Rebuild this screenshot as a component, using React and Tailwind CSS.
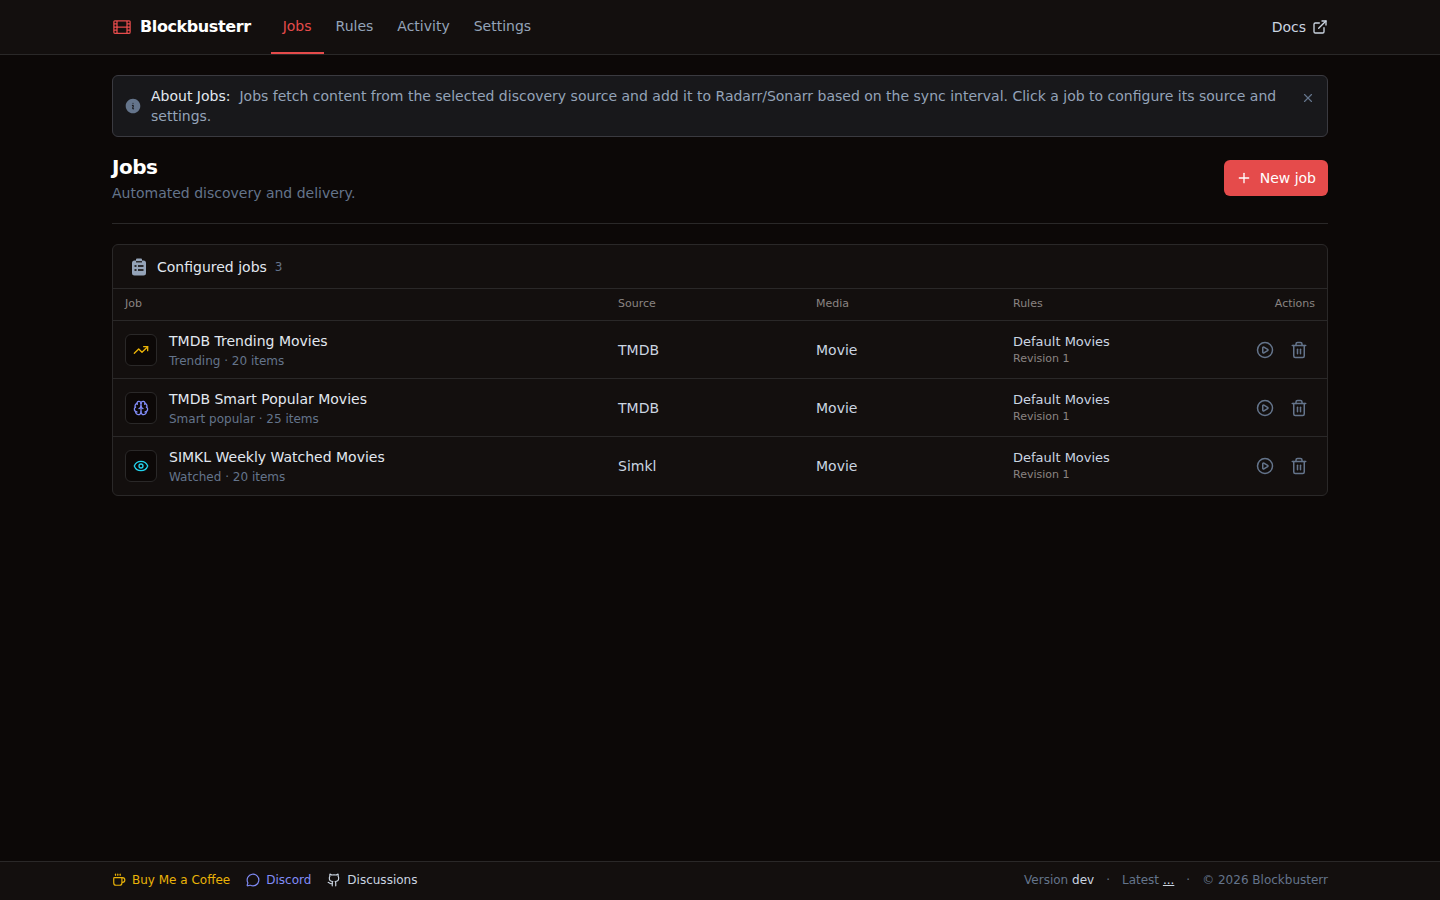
import React from 'react';
import { ExternalLink, X, Plus, TrendingUp, Brain, Eye, CirclePlay, Trash2, Coffee, MessageCircle, Github } from 'lucide-react';
import { HiOutlineFilm, HiInformationCircle } from 'react-icons/hi2';

const jobs = [
  { name: 'TMDB Trending Movies', sub: 'Trending · 20 items', source: 'TMDB', icon: TrendingUp, color: 'text-[#eab308]' },
  { name: 'TMDB Smart Popular Movies', sub: 'Smart popular · 25 items', source: 'TMDB', icon: Brain, color: 'text-[#818cf8]' },
  { name: 'SIMKL Weekly Watched Movies', sub: 'Watched · 20 items', source: 'Simkl', icon: Eye, color: 'text-[#22d3ee]' },
];

function ClipboardIcon() {
  return (
    <svg viewBox="0 0 16 18" className="w-4 h-[18px] mr-0.5 text-[#94a3b8]" fill="currentColor">
      <path d="M6 0.500h4a1 1 0 0 1 1 1V2.500h1.500A2.500 2.500 0 0 1 15 5v10a2.500 2.500 0 0 1-2.500 2.500h-9A2.500 2.500 0 0 1 1 15V5a2.500 2.500 0 0 1 2.500-2.500H5V1.500a1 1 0 0 1 1-1z" />
      <g fill="#130f0e">
        <rect x="5" y="3.200" width="6" height="1.200" />
        <rect x="3.500" y="7.200" width="2" height="1.600" />
        <rect x="7" y="7.200" width="5.500" height="1.600" />
        <rect x="3.500" y="11.200" width="2" height="1.600" />
        <rect x="7" y="11.200" width="5.500" height="1.600" />
      </g>
    </svg>
  );
}

export default function App() {
  return (
    <div className="min-h-screen flex flex-col bg-[#0c0807] text-white font-['DejaVu_Sans',sans-serif]">
      <header className="h-[55px] bg-[#130f0e] border-b border-[#2a2828]">
        <div className="max-w-7xl mx-auto px-8 h-full flex items-center justify-between">
          <div className="flex items-center h-full">
            <div className="flex items-center gap-2 mr-5">
              <HiOutlineFilm className="w-5 h-5 text-[#e54b4b]" />
              <span className="text-base font-bold tracking-tight">Blockbusterr</span>
            </div>
            <nav className="flex h-full text-sm text-[#94a3b8]">
              <a className="px-3 pt-4 text-[#e54b4b] border-b-2 border-[#e54b4b]">Jobs</a>
              <a className="px-3 pt-4">Rules</a>
              <a className="px-3 pt-4">Activity</a>
              <a className="px-3 pt-4">Settings</a>
            </nav>
          </div>
          <a className="flex items-center gap-1.5 text-sm text-[#cbd5e1]">
            Docs <ExternalLink className="w-4 h-4" />
          </a>
        </div>
      </header>

      <main className="flex-1 max-w-7xl w-full mx-auto px-8 pt-5">
        <div className="flex items-center gap-[9px] px-3 py-2.5 rounded-md border border-[#3a3a40] bg-[#18181b]">
          <HiInformationCircle className="w-[18px] h-[18px] -ml-px text-[#64748b] shrink-0" />
          <p className="flex-1 text-sm leading-5 text-[#94a3b8] pr-2">
            <span className="text-[#e2e8f0] mr-[9px]">About Jobs:</span>
            Jobs fetch content from the selected discovery source and add it to Radarr/Sonarr based on the sync interval. Click a job to configure its source and settings.
          </p>
          <X className="w-3.5 h-3.5 text-[#64748b] shrink-0 self-start mt-[5px]" />
        </div>

        <div className="flex items-center justify-between mt-5 pb-5 border-b border-[#2a2828]">
          <div>
            <h1 className="text-xl font-bold leading-5 tracking-tight">Jobs</h1>
            <p className="text-sm text-[#64748b] mt-1.5">Automated discovery and delivery.</p>
          </div>
          <button className="flex items-center gap-2 h-9 px-3 mb-1 rounded-md bg-[#e54b4b] text-sm text-white">
            <Plus className="w-4 h-4" /> New job
          </button>
        </div>

        <section className="mt-5 rounded-md border border-[#2a2828] bg-[#130f0e] overflow-hidden">
          <div className="flex items-center gap-2 h-11 pl-[18px] border-b border-[#2a2828]">
            <ClipboardIcon />
            <span className="text-sm text-[#e2e8f0]">Configured jobs</span>
            <span className="text-xs text-[#64748b]">3</span>
          </div>
          <table className="w-full table-fixed text-left">
            <colgroup>
              <col className="w-[493px]" />
              <col className="w-[198px]" />
              <col className="w-[197px]" />
              <col />
              <col className="w-[110px]" />
            </colgroup>
            <thead>
              <tr className="h-[31px] text-[11px] text-[#8a8482] border-b border-[#2a2828]">
                <th className="px-3 pb-px font-normal">Job</th>
                <th className="px-3 pb-px font-normal">Source</th>
                <th className="px-3 pb-px font-normal">Media</th>
                <th className="px-3 pb-px font-normal">Rules</th>
                <th className="px-3 pb-px font-normal text-right">Actions</th>
              </tr>
            </thead>
            <tbody>
              {jobs.map((job, i) => {
                const Icon = job.icon;
                const last = i === jobs.length - 1;
                const cell = last ? 'px-3' : 'px-3 pt-0.5';
                return (
                  <tr key={job.name} className={last ? 'h-[59px]' : 'h-[58px] border-b border-[#2a2828]'}>
                    <td className={cell}>
                      <div className="flex items-center gap-3">
                        <div className="w-8 h-8 flex items-center justify-center rounded-md border border-[#2a2828] bg-[#0c0807]">
                          <Icon className={`w-4 h-4 ${job.color}`} />
                        </div>
                        <div>
                          <div className="text-sm leading-5 text-[#e2e8f0]">{job.name}</div>
                          <div className="text-xs leading-4 mt-0.5 text-[#64748b]">{job.sub}</div>
                        </div>
                      </div>
                    </td>
                    <td className={`${cell} text-sm text-[#cbd5e1]`}>{job.source}</td>
                    <td className={`${cell} text-sm text-[#cbd5e1]`}>Movie</td>
                    <td className={last ? 'px-3 pt-0.5' : 'px-3 pt-0.5'}>
                      <div className="text-[13px] leading-4 text-[#cbd5e1]">Default Movies</div>
                      <div className="text-[11px] leading-4 mt-px text-[#8a8482]">Revision 1</div>
                    </td>
                    <td className={cell}>
                      <div className="flex items-center justify-end gap-4 pr-[7px] text-[#64748b]">
                        <CirclePlay className="w-[18px] h-[18px]" />
                        <Trash2 className="w-[18px] h-[18px]" />
                      </div>
                    </td>
                  </tr>
                );
              })}
            </tbody>
          </table>
        </section>
      </main>

      <footer className="h-[39px] bg-[#130f0e] border-t border-[#2a2828]">
        <div className="max-w-7xl mx-auto px-8 pb-[3px] h-full flex items-center justify-between text-xs">
          <div className="flex items-center gap-4">
            <a className="flex items-center gap-1.5 text-[#eab308]"><Coffee className="w-3.5 h-3.5" /> Buy Me a Coffee</a>
            <a className="flex items-center gap-1.5 text-[#818cf8]"><MessageCircle className="w-3.5 h-3.5" /> Discord</a>
            <a className="flex items-center gap-1.5 text-[#cbd5e1]"><Github className="w-3.5 h-3.5" /> Discussions</a>
          </div>
          <div className="flex items-center gap-3 text-[#64748b]">
            <span>Version <span className="text-[#cbd5e1]">dev</span></span>
            <span>·</span>
            <span>Latest <span className="text-[#cbd5e1] underline">...</span></span>
            <span>·</span>
            <span>© 2026 Blockbusterr</span>
          </div>
        </div>
      </footer>
    </div>
  );
}
